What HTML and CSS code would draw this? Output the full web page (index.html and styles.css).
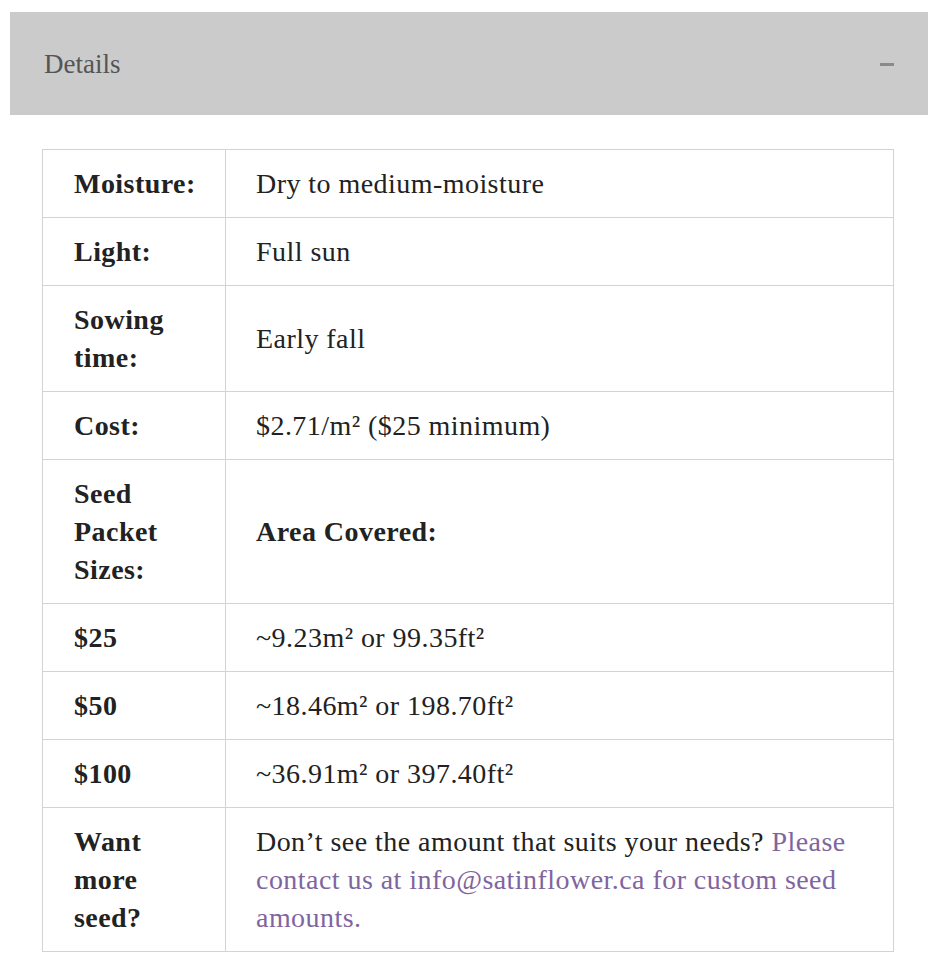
FILE: index.html
```html
<!DOCTYPE html>
<html>
<head>
<meta charset="utf-8">
<link rel="stylesheet" href="styles.css">
</head>
<body>
<div class="panel">
  <div class="panel-head">
    <span class="panel-title">Details</span>
    <span class="panel-toggle"></span>
  </div>
  <div class="panel-body">
    <table class="details">
      <colgroup><col class="col-label"><col class="col-value"></colgroup>
      <tr><th>Moisture:</th><td>Dry to medium-moisture</td></tr>
      <tr><th>Light:</th><td>Full sun</td></tr>
      <tr><th>Sowing time:</th><td>Early fall</td></tr>
      <tr><th>Cost:</th><td>$2.71/m² ($25 minimum)</td></tr>
      <tr><th>Seed Packet Sizes:</th><td><strong>Area Covered:</strong></td></tr>
      <tr><th>$25</th><td>~9.23m² or 99.35ft²</td></tr>
      <tr><th>$50</th><td>~18.46m² or 198.70ft²</td></tr>
      <tr><th>$100</th><td>~36.91m² or 397.40ft²</td></tr>
      <tr><th>Want more seed?</th><td>Don’t see the amount that suits your needs? <a href="#">Please contact us at info@satinflower.ca for custom seed amounts.</a></td></tr>
    </table>
  </div>
</div>
</body>
</html>
```

FILE: styles.css
```css
html, body {
  margin: 0;
  padding: 0;
  background: #fff;
}
body {
  padding: 12px 10px 0 10px;
  font-family: "Liberation Serif", "Times New Roman", serif;
  color: #222;
}
.panel-head {
  height: 103px;
  background: #cbcbcb;
  display: flex;
  align-items: center;
  justify-content: space-between;
  padding: 0 34px 0 34px;
  box-sizing: border-box;
}
.panel-title {
  font-size: 27px;
  color: #555;
  position: relative;
  top: 1px;
}
.panel-toggle {
  width: 14px;
  height: 3px;
  background: #8a8a8a;
  position: relative;
  top: 1px;
}
.panel-body {
  padding: 34px 34px 0 32px;
}
.details {
  width: 100%;
  table-layout: fixed;
  border-collapse: collapse;
  font-size: 28px;
  line-height: 38px;
  letter-spacing: 0.45px;
}
.col-label {
  width: 183px;
}
.details th,
.details td {
  border: 1px solid #d3d3d3;
  padding: 15px 30px 14px 31px;
  vertical-align: middle;
  text-align: left;
}
.details td {
  padding-left: 30px;
  color: #222;
}
.details th {
  font-weight: bold;
  color: #222;
}
.details a {
  color: #7f659f;
  text-decoration: none;
}
```
